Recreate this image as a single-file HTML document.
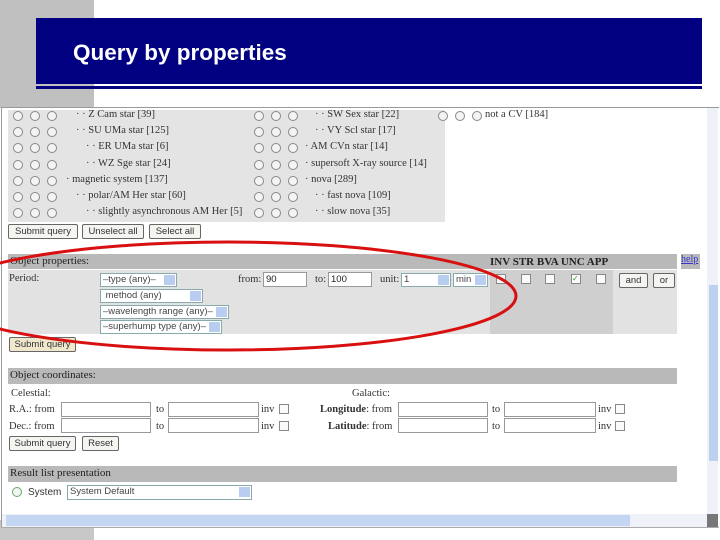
<!DOCTYPE html>
<html><head><style>
*{margin:0;padding:0;box-sizing:border-box}
body{width:720px;height:540px;position:relative;overflow:hidden;background:#fff;font-family:"Liberation Serif",serif;font-size:11px;color:#222}
.a{position:absolute}
.r{position:absolute;width:10px;height:10px;border:1px solid #888;border-radius:50%;background:#f4f4f4}
.t{position:absolute;white-space:nowrap;font-size:10.5px;color:#333}
.btn{position:absolute;height:15px;border:1px solid #666;border-radius:2px;background:#f4f4f0;font-family:"Liberation Sans",sans-serif;font-size:9.5px;text-align:center;line-height:13px;color:#333}
.sel{position:absolute;height:14px;border:1px solid #8aa;background:#fff;font-family:"Liberation Sans",sans-serif;font-size:9.5px;line-height:12px;padding-left:2px;color:#444}
.sel:after{content:"";position:absolute;right:1px;top:1px;width:11px;height:10px;background:#b8cdf0}
.inp{position:absolute;height:15px;border:1px solid #999;background:#fff;font-family:"Liberation Sans",sans-serif;font-size:9.5px;padding-left:2px;line-height:13px}
.cb{position:absolute;width:10px;height:10px;border:1px solid #888;background:#fafafa}
.bar{position:absolute;background:#b9b9b9;font-size:11px;padding-left:2px;line-height:15px;color:#222}
</style></head><body>
<div class="a" style="left:0;top:0;width:94px;height:108px;background:#c0c0c0"></div>
<div class="a" style="left:0;top:520px;width:94px;height:20px;background:#c8c8c8"></div>
<div class="a" style="left:36px;top:18px;width:666px;height:66px;background:#000080"></div>
<div class="a" style="left:36px;top:86px;width:666px;height:3px;background:#000080"></div>
<div class="a" style="left:73px;top:40px;color:#fff;font-family:'Liberation Sans',sans-serif;font-weight:bold;font-size:22.5px">Query by properties</div>
<div class="a" style="left:1px;top:107px;width:718px;height:1px;background:#999"></div>
<div class="a" style="left:1px;top:107px;width:1px;height:420px;background:#999"></div>
<div class="a" style="left:8px;top:110px;width:437px;height:112px;background:#e4e4e4"></div>
<div id="cats"></div>
<div class="btn" style="left:8px;top:224px;width:70px">Submit query</div>
<div class="btn" style="left:82px;top:224px;width:62px">Unselect all</div>
<div class="btn" style="left:149px;top:224px;width:52px">Select all</div>
<div class="bar" style="left:8px;top:254px;width:669px;height:15px">Object properties:</div>
<div class="a" style="left:490px;top:256px;font-size:11px;font-weight:bold;color:#222">INV STR BVA UNC APP</div>
<div class="a" style="left:681px;top:254px;width:19px;height:15px;background:#b9b9b9;font-size:10px;color:#33c;text-decoration:underline">help</div>
<div class="a" style="left:8px;top:270px;width:669px;height:64px;background:#e2e2e2"></div>
<div class="a" style="left:490px;top:270px;width:123px;height:64px;background:#cfcfcf"></div>
<div class="t" style="left:9px;top:273px">Period:</div>
<div class="sel" style="left:100px;top:273px;width:77px">–type (any)–</div>
<div class="sel" style="left:100px;top:289px;width:103px">&nbsp;method (any)</div>
<div class="sel" style="left:100px;top:305px;width:129px">–wavelength range (any)–</div>
<div class="sel" style="left:100px;top:320px;width:122px">–superhump type (any)–</div>
<div class="t" style="left:238px;top:274px">from:</div>
<div class="inp" style="left:263px;top:272px;width:44px">90</div>
<div class="t" style="left:315px;top:274px">to:</div>
<div class="inp" style="left:328px;top:272px;width:44px">100</div>
<div class="t" style="left:380px;top:274px">unit:</div>
<div class="sel" style="left:401px;top:273px;width:50px">1</div>
<div class="sel" style="left:453px;top:273px;width:35px">min</div>
<div class="cb" style="left:496px;top:274px"></div>
<div class="cb" style="left:521px;top:274px"></div>
<div class="cb" style="left:545px;top:274px"></div>
<div class="cb" style="left:571px;top:274px;color:#393;font-size:8px;line-height:8px">✓</div>
<div class="cb" style="left:596px;top:274px"></div>
<div class="btn" style="left:619px;top:273px;width:29px">and</div>
<div class="btn" style="left:653px;top:273px;width:22px">or</div>
<div class="btn" style="left:9px;top:337px;width:67px;background:#efe8cc">Submit query</div>
<div class="bar" style="left:8px;top:368px;width:669px;height:16px">Object coordinates:</div>
<div class="t" style="left:11px;top:388px">Celestial:</div>
<div class="t" style="left:352px;top:388px">Galactic:</div>
<div class="t" style="left:9px;top:404px">R.A.: from</div>
<div class="inp" style="left:61px;top:402px;width:90px"></div>
<div class="t" style="left:156px;top:404px">to</div>
<div class="inp" style="left:168px;top:402px;width:91px"></div>
<div class="t" style="left:261px;top:404px">inv</div><div class="cb" style="left:279px;top:404px"></div>
<div class="t" style="left:9px;top:421px">Dec.: from</div>
<div class="inp" style="left:61px;top:418px;width:90px"></div>
<div class="t" style="left:156px;top:421px">to</div>
<div class="inp" style="left:168px;top:418px;width:91px"></div>
<div class="t" style="left:261px;top:421px">inv</div><div class="cb" style="left:279px;top:421px"></div>
<div class="t" style="left:320px;top:404px"><b>Longitude</b>: from</div>
<div class="inp" style="left:398px;top:402px;width:90px"></div>
<div class="t" style="left:492px;top:404px">to</div>
<div class="inp" style="left:504px;top:402px;width:92px"></div>
<div class="t" style="left:598px;top:404px">inv</div><div class="cb" style="left:615px;top:404px"></div>
<div class="t" style="left:328px;top:421px"><b>Latitude</b>: from</div>
<div class="inp" style="left:398px;top:418px;width:90px"></div>
<div class="t" style="left:492px;top:421px">to</div>
<div class="inp" style="left:504px;top:418px;width:92px"></div>
<div class="t" style="left:598px;top:421px">inv</div><div class="cb" style="left:615px;top:421px"></div>
<div class="btn" style="left:9px;top:436px;width:67px">Submit query</div>
<div class="btn" style="left:82px;top:436px;width:37px">Reset</div>
<div class="bar" style="left:8px;top:466px;width:669px;height:16px">Result list presentation</div>
<div class="r" style="left:12px;top:487px;border-color:#6a6"></div>
<div class="t" style="left:28px;top:487px;font-family:'Liberation Sans',sans-serif;font-size:10px">System</div>
<div class="sel" style="left:67px;top:485px;width:185px;height:15px">System Default</div>
<div class="a" style="left:707px;top:108px;width:11px;height:420px;background:#eef2f8"></div>
<div class="a" style="left:709px;top:285px;width:9px;height:176px;background:#bcd0f0"></div>
<div class="a" style="left:2px;top:514px;width:705px;height:13px;background:#eef2f8"></div>
<div class="a" style="left:6px;top:515px;width:624px;height:11px;background:#c4d6f2"></div>
<div class="a" style="left:707px;top:514px;width:11px;height:13px;background:#777"></div>
<div class="a" style="left:1px;top:527px;width:718px;height:1px;background:#aaa"></div>
<svg class="a" style="left:0;top:0" width="720" height="540"><ellipse cx="228" cy="296" rx="288" ry="54" fill="none" stroke="#d81010" stroke-width="3"/></svg>
<script>
var L=[["· Z Cam star [39]",1],["· SU UMa star [125]",1],["· ER UMa star [6]",2],["· WZ Sge star [24]",2],["magnetic system [137]",0],["· polar/AM Her star [60]",1],["· slightly asynchronous AM Her [5]",2]];
var R=[["· SW Sex star [22]",1],["· VY Scl star [17]",1],["AM CVn star [14]",0],["supersoft X-ray source [14]",0],["nova [289]",0],["· fast nova [109]",1],["· slow nova [35]",1]];
var h="";
for(var i=0;i<7;i++){var y=111+i*16.2;
for(var k=0;k<3;k++){h+='<div class="r" style="left:'+(13+k*17)+'px;top:'+y+'px"></div>';h+='<div class="r" style="left:'+(254+k*17)+'px;top:'+y+'px"></div>';}
h+='<div class="t" style="left:'+(66+L[i][1]*10)+'px;top:'+(y-2)+'px">· '+L[i][0]+'</div>';
h+='<div class="t" style="left:'+(305+R[i][1]*10)+'px;top:'+(y-2)+'px">· '+R[i][0]+'</div>';}
for(var k=0;k<3;k++)h+='<div class="r" style="left:'+(438+k*17)+'px;top:111px"></div>';
h+='<div class="t" style="left:485px;top:109px">not a CV [184]</div>';
document.getElementById("cats").innerHTML=h;
</script>
</body></html>
